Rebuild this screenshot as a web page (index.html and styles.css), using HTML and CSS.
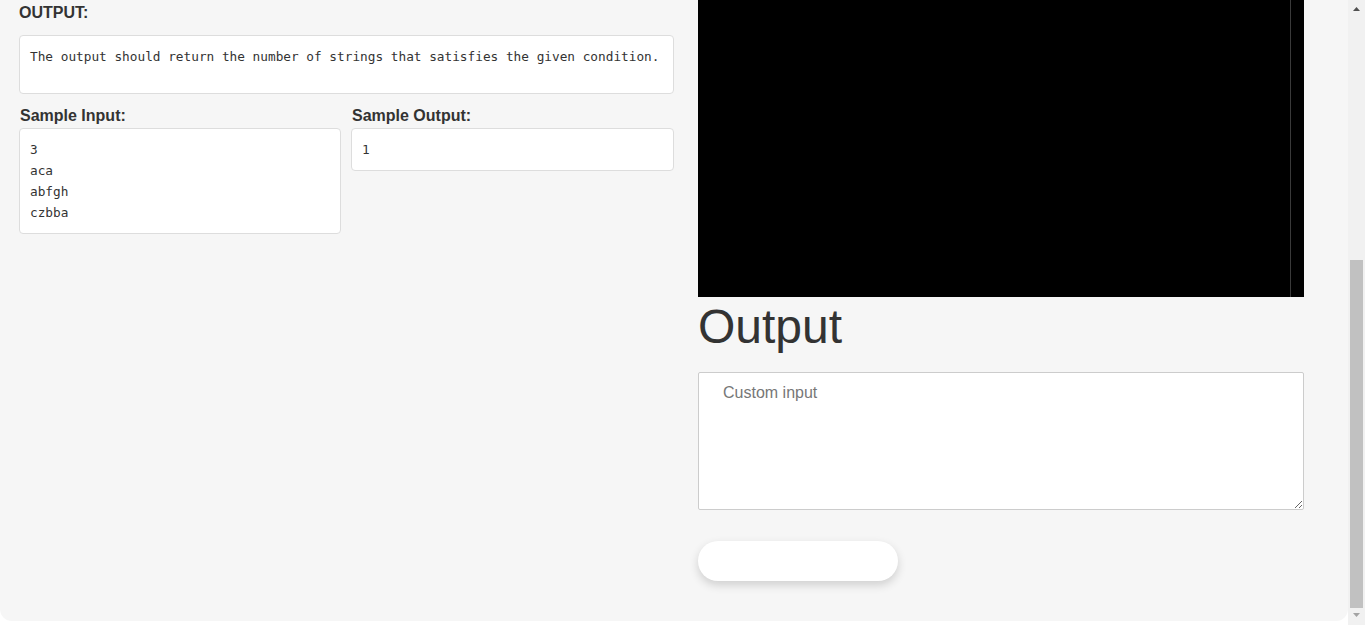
FILE: index.html
```html
<!DOCTYPE html>
<html lang="en">
<head>
<meta charset="utf-8">
<title>Problem</title>
<link rel="stylesheet" href="styles.css">
</head>
<body>
<div class="page">
  <main class="card">
    <section class="problem">
      <h3 class="label">OUTPUT:</h3>
      <pre class="box box-tall">The output should return the number of strings that satisfies the given condition.</pre>
      <div class="samples">
        <div class="sample">
          <h3 class="label">Sample Input:</h3>
          <pre class="box">3
aca
abfgh
czbba</pre>
        </div>
        <div class="sample">
          <h3 class="label">Sample Output:</h3>
          <pre class="box">1</pre>
        </div>
      </div>
    </section>
    <section class="workspace">
      <div class="editor"><div class="editor-scroll"></div></div>
      <h1 class="output-title">Output</h1>
      <textarea class="custom-input" placeholder="Custom input"></textarea>
      <button class="run-btn" type="button"></button>
    </section>
  </main>
  <aside class="scrollbar" aria-hidden="true">
    <div class="sb-arrow sb-up"><svg width="17" height="17" viewBox="0 0 17 17"><path d="M5 11 L12 11 L8.5 7 Z" fill="#505050"/></svg></div>
    <div class="sb-track"><div class="sb-thumb"></div></div>
    <div class="sb-arrow sb-down"><svg width="17" height="17" viewBox="0 0 17 17"><path d="M5 5 L12 5 L8.5 9 Z" fill="#a3a3a3"/></svg></div>
  </aside>
</div>
</body>
</html>
```

FILE: styles.css
```css
html, body {
  margin: 0;
  padding: 0;
  height: 625px;
  overflow: hidden;
}
body {
  background: #ffffff;
  font-family: "Liberation Sans", Arial, Helvetica, sans-serif;
  color: #333333;
}
.page {
  display: flex;
  height: 625px;
}
.card {
  flex: 1;
  align-self: flex-start;
  background: #f6f6f6;
  border-radius: 0 0 12px 12px;
  display: grid;
  grid-template-columns: 655px 606px;
  column-gap: 24px;
  padding: 0 44px 40px 19px;
  align-items: start;
}
.problem {
  padding-top: 3px;
}
.label {
  margin: 0 0 12px;
  font-size: 16px;
  line-height: 20px;
  font-weight: bold;
  color: #333333;
}
.box {
  margin: 0;
  background: #ffffff;
  border: 1px solid #dddddd;
  border-radius: 4px;
  padding: 10px;
  font-family: "DejaVu Sans Mono", "Liberation Mono", monospace;
  font-size: 12.75px;
  line-height: 21px;
  color: #333333;
  white-space: pre;
}
.box-tall {
  padding-bottom: 26px;
}
.samples {
  margin-top: 12px;
  display: grid;
  grid-template-columns: 322px 323px;
  column-gap: 10px;
}
.sample .label {
  margin-bottom: 2px;
  margin-left: 1px;
}
.workspace {
  display: flex;
  flex-direction: column;
  align-items: flex-start;
}
.editor {
  width: 606px;
  height: 297px;
  background: #000000;
  display: flex;
  justify-content: flex-end;
}
.editor-scroll {
  width: 1px;
  background: #3a3a3a;
  margin-right: 13px;
}
.output-title {
  margin: 3px 0 19px;
  font-size: 48px;
  line-height: 53px;
  font-weight: normal;
  color: #333333;
}
.custom-input {
  display: block;
  box-sizing: border-box;
  width: 606px;
  height: 138px;
  margin: 0;
  padding: 11px 24px 10px;
  border: 1px solid #cccccc;
  border-radius: 2px;
  background: #ffffff;
  font-family: "Liberation Sans", Arial, sans-serif;
  font-size: 16px;
  color: #333333;
  resize: vertical;
}
.custom-input::placeholder {
  color: #777777;
}
.run-btn {
  margin-top: 31px;
  width: 200px;
  height: 40px;
  border: none;
  border-radius: 20px;
  background: #ffffff;
  box-shadow: 0 4px 10px rgba(0, 0, 0, 0.16);
  cursor: pointer;
}
.scrollbar {
  width: 17px;
  flex: 0 0 17px;
  background: #f1f1f1;
  display: flex;
  flex-direction: column;
}
.sb-arrow {
  height: 17px;
  flex: 0 0 17px;
}
.sb-arrow svg {
  display: block;
}
.sb-track {
  flex: 1;
  display: flex;
  flex-direction: column;
  justify-content: flex-end;
}
.sb-thumb {
  height: 348px;
  margin: 0 2px;
  background: #c1c1c1;
}
```
